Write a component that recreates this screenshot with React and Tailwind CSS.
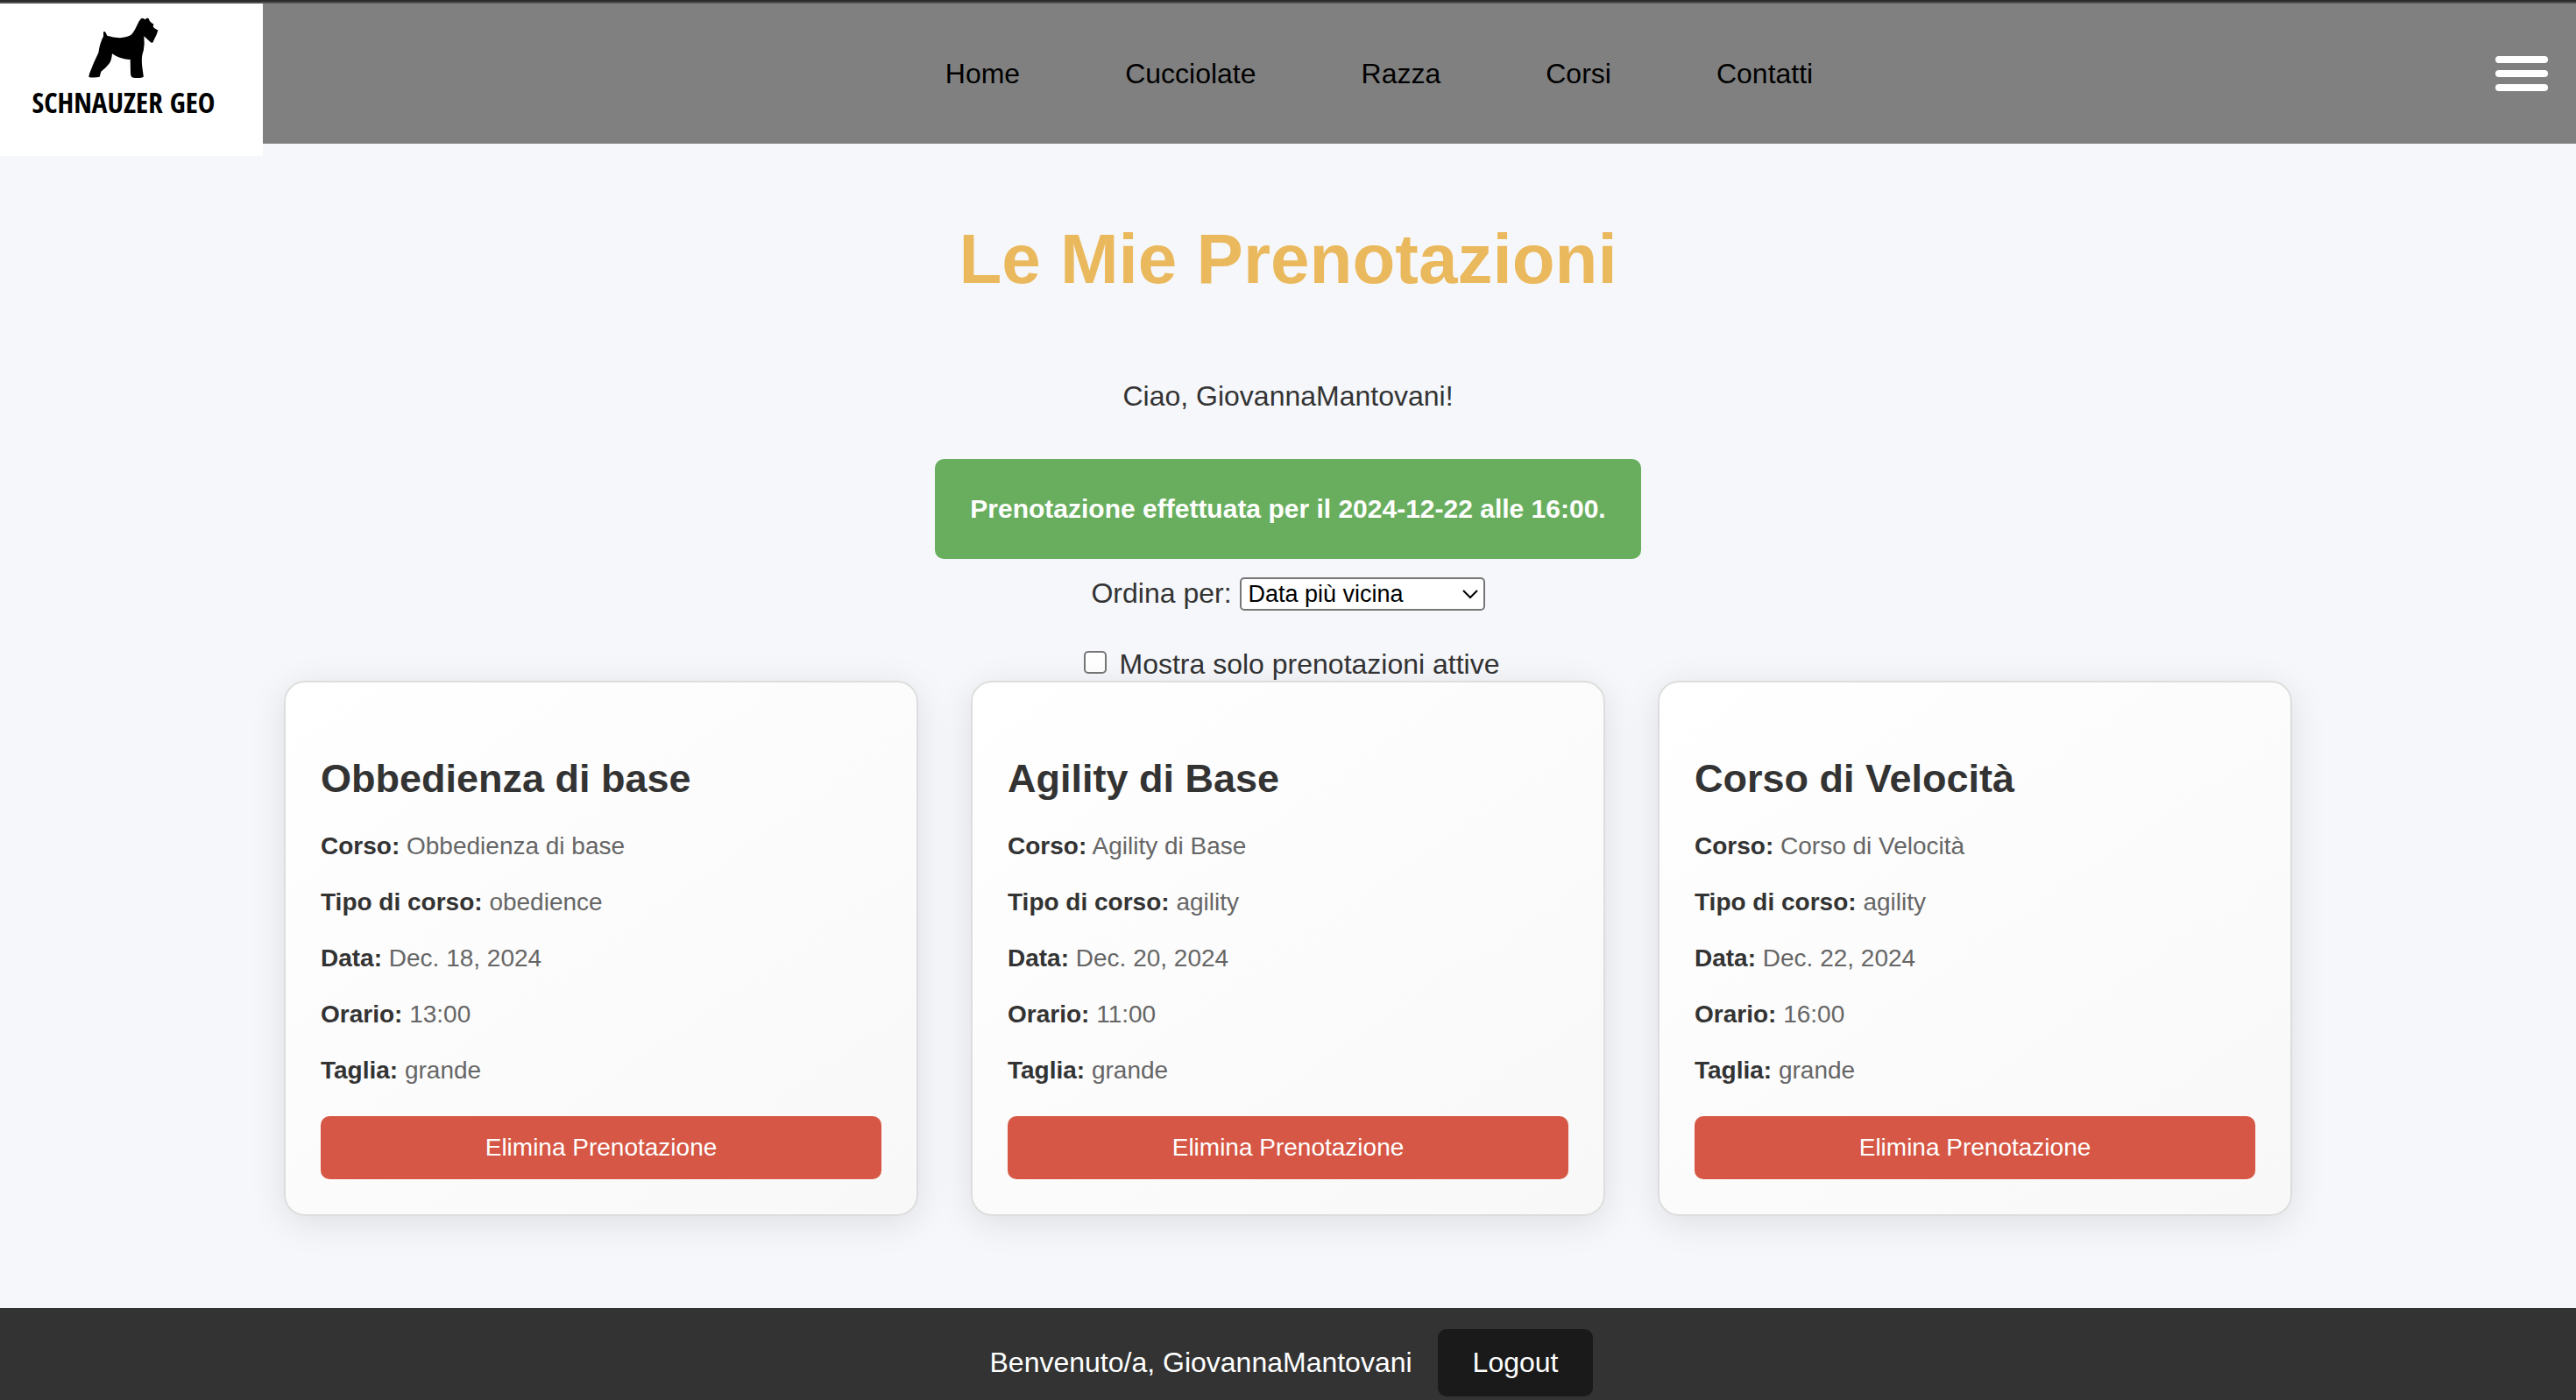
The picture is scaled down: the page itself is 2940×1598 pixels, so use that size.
const corsi = [
  { nome: 'Obbedienza di base', tipo: 'obedience', data: 'Dec. 18, 2024', orario: '13:00', taglia: 'grande' },
  { nome: 'Agility di Base', tipo: 'agility', data: 'Dec. 20, 2024', orario: '11:00', taglia: 'grande' },
  { nome: 'Corso di Velocità', tipo: 'agility', data: 'Dec. 22, 2024', orario: '16:00', taglia: 'grande' },
];

const links = ['Home', 'Cucciolate', 'Razza', 'Corsi', 'Contatti'];

function Logo() {
  return (
    <a href="#" className="-mb-[14px] flex h-[174px] w-[300px] shrink-0 flex-col items-start bg-white pt-3 pl-[38px] text-black">
      <svg viewBox="300 48 246 224" className="ml-[62px] h-[75px] w-[82px]" aria-hidden="true">
        <path d="M304 262 L306 252 Q320 214 337 180 Q342 146 354 124 L354 109 Q358 106 361 110 L367 122 Q388 129 410 129 Q436 128 449 119 Q460 107 470 84 Q476 70 483 63 Q488 60 493 64 L497 66 L502 62 Q508 60 510 65 L512 71 L519 78 L526 82 L524 91 L530 97 L541 103 L536 118 L523 145 Q519 147 514 143 L493 123 L494 150 Q493 170 487 188 Q484 204 487 230 L491 258 Q493 264 486 265 Q470 268 454 265 Q448 264 447 250 L446 203 Q428 204 410 197 Q394 190 384 183 Q382 206 374 217 Q362 233 346 245 L341 263 Q324 267 306 264 Z" />
      </svg>
      <span className="flex w-[206px] justify-center font-['Noto_Sans_ExtraCondensed','Open_Sans_Condensed','Roboto_Condensed','Liberation_Sans_Narrow',sans-serif] text-[33px] leading-[52px] font-bold whitespace-nowrap">
        SCHNAUZER GEO
      </span>
    </a>
  );
}

function Riga({ etichetta, valore }) {
  return (
    <p>
      <strong className="text-[#333333]">{etichetta}:</strong> {valore}
    </p>
  );
}

function Card({ corso }) {
  return (
    <article className="flex w-[724px] flex-col rounded-3xl border-2 border-[#dddddd] bg-linear-145 from-white to-[#f8f8f8] p-10 shadow-[0_8px_40px_rgba(0,0,0,0.1)]">
      <h2 className="mt-11 mb-[35px] text-[45px] leading-[52px] font-bold text-[#333333]">{corso.nome}</h2>
      <div className="flex flex-col gap-8 text-[28px] leading-8 text-[#666666]">
        <Riga etichetta="Corso" valore={corso.nome} />
        <Riga etichetta="Tipo di corso" valore={corso.tipo} />
        <Riga etichetta="Data" valore={corso.data} />
        <Riga etichetta="Orario" valore={corso.orario} />
        <Riga etichetta="Taglia" valore={corso.taglia} />
      </div>
      <button type="button" className="mt-9 rounded-[10px] bg-[#d65745] py-5 text-[28px] leading-8 text-white">
        Elimina Prenotazione
      </button>
    </article>
  );
}

export default function App() {
  return (
    <div className="flex min-h-screen flex-col bg-[#f5f7fb] font-['Liberation_Sans',Arial,sans-serif] text-[32px] leading-9 text-[#333333]">
      <div className="h-1 border-b-2 border-[#505050] bg-[#2b2b2b]" />
      <header className="flex h-40 items-center justify-between bg-[#808080] pr-8">
        <div className="self-start">
          <Logo />
        </div>
        <nav>
          <ul className="flex gap-[120px] text-black">
            {links.map((l) => (
              <li key={l}>
                <a href="#">{l}</a>
              </li>
            ))}
          </ul>
        </nav>
        <button type="button" aria-label="Menu" className="flex w-[60px] flex-col gap-2">
          <span className="h-2 w-full rounded-full bg-white" />
          <span className="h-2 w-full rounded-full bg-white" />
          <span className="h-2 w-full rounded-full bg-white" />
        </button>
      </header>

      <main className="flex grow flex-col items-center">
        <h1 className="mt-[86px] text-[80px] leading-[92px] font-bold text-[#ebb95d]">Le Mie Prenotazioni</h1>
        <p className="mt-[92px]">Ciao, GiovannaMantovani!</p>
        <div role="status" className="mt-[54px] rounded-[10px] bg-[#69ae5e] p-10 text-[30px] leading-[34px] font-bold text-white">
          Prenotazione effettuata per il 2024-12-22 alle 16:00.
        </div>
        <div className="mt-[21px] flex items-start gap-[9px]">
          <label htmlFor="ordina">Ordina per:</label>
          <span className="relative flex">
            <select id="ordina" className="h-[38px] w-[280px] appearance-none rounded-[5px] border-2 border-[#767676] bg-white pl-2 text-[27px] leading-8 text-black">
              <option>Data più vicina</option>
              <option>Data più lontana</option>
            </select>
            <svg viewBox="0 0 18 16" className="pointer-events-none absolute top-3 right-2 h-4 w-[18px]" fill="none" stroke="#000" strokeWidth="2" aria-hidden="true">
              <path d="M1 3 L9 11 L17 3" />
            </svg>
          </span>
        </div>
        <div className="mt-[43px] mb-px flex items-start gap-[15px] pl-2">
          <input id="attive" type="checkbox" className="mt-[3px] size-[26px] appearance-none rounded-[5px] border-2 border-[#767676] bg-white checked:bg-[#767676]" />
          <label htmlFor="attive">Mostra solo prenotazioni attive</label>
        </div>
        <section className="flex flex-wrap justify-center gap-[60px]">
          {corsi.map((c) => (
            <Card key={c.nome} corso={c} />
          ))}
        </section>
      </main>

      <footer className="flex items-start justify-center gap-[29px] bg-[#333333] pt-6 pb-1 pl-2 leading-[37px] text-white">
        <p className="py-5">Benvenuto/a, GiovannaMantovani</p>
        <button type="button" className="rounded-[10px] bg-[#1a1a1a] px-10 py-5">
          Logout
        </button>
      </footer>
    </div>
  );
}
